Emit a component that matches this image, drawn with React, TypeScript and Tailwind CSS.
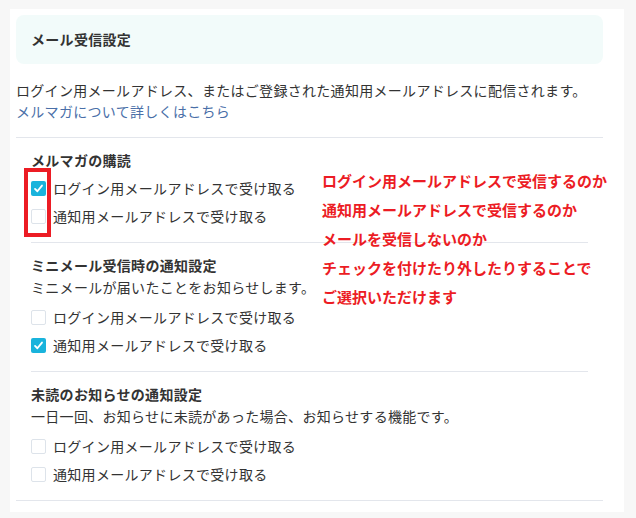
import React from 'react';

type Option = { label: string; checked: boolean };
type Section = { title: string; desc?: string; options: Option[] };

const sections: Section[] = [
  {
    title: 'メルマガの購読',
    options: [
      { label: 'ログイン用メールアドレスで受け取る', checked: true },
      { label: '通知用メールアドレスで受け取る', checked: false },
    ],
  },
  {
    title: 'ミニメール受信時の通知設定',
    desc: 'ミニメールが届いたことをお知らせします。',
    options: [
      { label: 'ログイン用メールアドレスで受け取る', checked: false },
      { label: '通知用メールアドレスで受け取る', checked: true },
    ],
  },
  {
    title: '未読のお知らせの通知設定',
    desc: '一日一回、お知らせに未読があった場合、お知らせする機能です。',
    options: [
      { label: 'ログイン用メールアドレスで受け取る', checked: false },
      { label: '通知用メールアドレスで受け取る', checked: false },
    ],
  },
];

const notes = [
  'ログイン用メールアドレスで受信するのか',
  '通知用メールアドレスで受信するのか',
  'メールを受信しないのか',
  'チェックを付けたり外したりすることで',
  'ご選択いただけます',
];

function CheckRow({ label, checked }: Option) {
  return (
    <label className="flex items-center gap-[7px] h-[28px]">
      {checked ? (
        <span className="w-[15px] h-[15px] rounded-[2px] bg-[#19b3dc] flex items-center justify-center shrink-0">
          <svg viewBox="0 0 12 12" className="w-[11px] h-[11px]">
            <polyline points="2.2,6.4 4.8,9 9.8,2.8" fill="none" stroke="white" strokeWidth="2" strokeLinecap="round" strokeLinejoin="round" />
          </svg>
        </span>
      ) : (
        <span className="w-[15px] h-[15px] rounded-[2px] border border-[#dde3ea] bg-white shrink-0" />
      )}
      <span>{label}</span>
    </label>
  );
}

export default function App() {
  return (
    <div
      className="relative w-[636px] h-[518px] bg-[#f7f7f7] pt-[9px] pl-[10px] text-[#333] text-[14px] tracking-[0.3px]"
      style={{ fontFamily: '"Noto Sans CJK JP", "Noto Sans", sans-serif' }}
    >
      <div className="w-[614px] bg-white pt-[6px] pl-[6px] pr-[21px] pb-[11px]">
        <div className="h-[49px] rounded-lg bg-[#f2fbfa] px-[15px] flex items-center font-bold">
          メール受信設定
        </div>

        <div className="mt-[16px] pb-[15px] leading-[21px] border-b border-[#e3e6ec]">
          <p>ログイン用メールアドレス、またはご登録された通知用メールアドレスに配信されます。</p>
          <a className="text-[#4a6fa8]">メルマガについて詳しくはこちら</a>
        </div>

        <div className="px-[15px] divide-y divide-[#e3e6ec] border-b border-[#e3e6ec]">
          {sections.map((s, i) => (
            <div key={i} className="pt-[11px] pb-[12px]">
              <h3 className="font-bold leading-[22px]">{s.title}</h3>
              {s.desc && <p className="leading-[23px]">{s.desc}</p>}
              <div className={s.desc ? 'mt-[4px]' : 'mt-[3px]'}>
                {s.options.map((o, j) => (
                  <CheckRow key={j} {...o} />
                ))}
              </div>
            </div>
          ))}
        </div>
      </div>

      {/* annotation overlay */}
      <div className="absolute left-[24px] top-[168px] w-[27px] h-[69px] border-[4px] border-[#ec1c24]" />
      <div className="absolute left-[322px] top-[166px] text-[15px] font-bold leading-[29px] tracking-normal text-[#ec1c24]">
        {notes.map((n) => (
          <p key={n}>{n}</p>
        ))}
      </div>
    </div>
  );
}
